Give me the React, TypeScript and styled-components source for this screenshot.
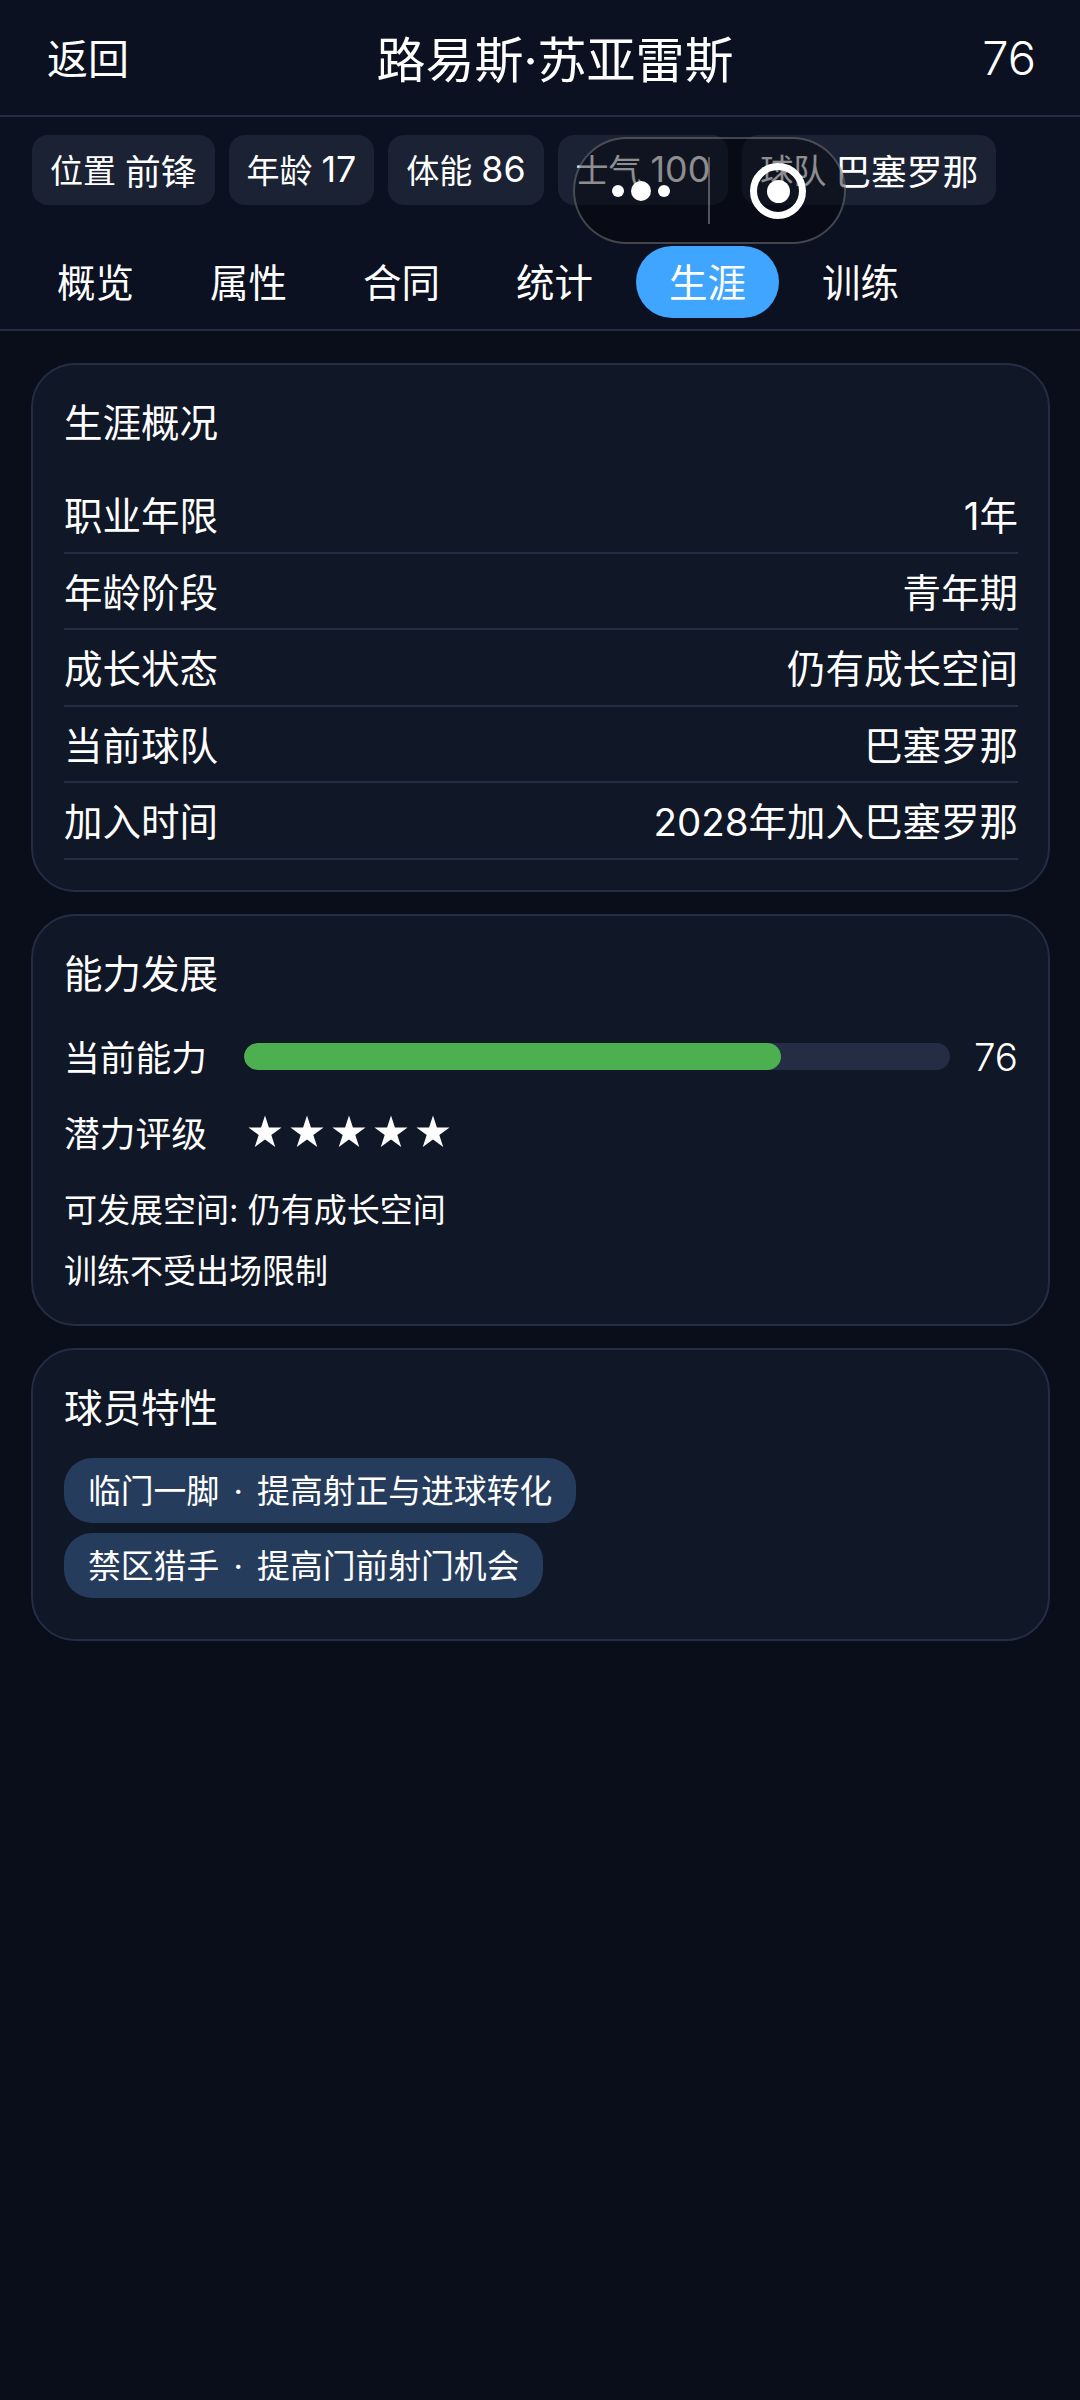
import React from 'react';
import styled, { createGlobalStyle } from 'styled-components';

const GlobalStyle = createGlobalStyle`
  html, body {
    margin: 0;
    padding: 0;
    background: #0a0e1a;
  }
  * {
    box-sizing: border-box;
  }
`;

const overview = [
  { label: '职业年限', value: '1年' },
  { label: '年龄阶段', value: '青年期' },
  { label: '成长状态', value: '仍有成长空间' },
  { label: '当前球队', value: '巴塞罗那' },
  { label: '加入时间', value: '2028年加入巴塞罗那' },
];

const quickStats = [
  { label: '位置', value: '前锋' },
  { label: '年龄', value: '17' },
  { label: '体能', value: '86' },
  { label: '士气', value: '100' },
  { label: '球队', value: '巴塞罗那' },
];

const tabs = ['概览', '属性', '合同', '统计', '生涯', '训练'];

const traits = ['临门一脚 · 提高射正与进球转化', '禁区猎手 · 提高门前射门机会'];

export default function App() {
  return (
    <>
      <GlobalStyle />
      <Page>
        <Header>
          <BackText>返回</BackText>
          <PlayerName>路易斯·苏亚雷斯</PlayerName>
          <Rating>76</Rating>
        </Header>

        <TopArea>
          <StatRow>
            {quickStats.map((s) => (
              <StatChip key={s.label}>
                <StatLabel>{s.label}</StatLabel>
                <StatValue>{s.value}</StatValue>
              </StatChip>
            ))}
          </StatRow>
          <TabRow>
            {tabs.map((t) => (
              <Tab key={t} $active={t === '生涯'}>
                {t}
              </Tab>
            ))}
          </TabRow>
        </TopArea>

        <Content>
          <Card>
            <CardTitle>生涯概况</CardTitle>
            {overview.map((row) => (
              <InfoRow key={row.label}>
                <span>{row.label}</span>
                <span>{row.value}</span>
              </InfoRow>
            ))}
          </Card>

          <Card>
            <CardTitle>能力发展</CardTitle>
            <AbilityRow>
              <AbilityLabel>当前能力</AbilityLabel>
              <BarTrack>
                <BarFill style={{ width: '76%' }} />
              </BarTrack>
              <AbilityValue>76</AbilityValue>
            </AbilityRow>
            <PotentialRow>
              <AbilityLabel>潜力评级</AbilityLabel>
              <Stars>
                {[0, 1, 2, 3, 4].map((i) => (
                  <StarIcon key={i} viewBox="0 0 24 24">
                    <path d="M12 1.6L14.47 9.2L22.46 9.2L15.99 13.9L18.47 21.5L12 16.8L5.53 21.5L8.01 13.9L1.54 9.2L9.53 9.2Z" />
                  </StarIcon>
                ))}
              </Stars>
            </PotentialRow>
            <NoteList>
              <Note>可发展空间: 仍有成长空间</Note>
              <Note>训练不受出场限制</Note>
            </NoteList>
          </Card>

          <Card>
            <CardTitle>球员特性</CardTitle>
            <TraitList>
              {traits.map((t) => (
                <TraitChip key={t}>{t}</TraitChip>
              ))}
            </TraitList>
          </Card>
        </Content>

        <CapsuleMenu>
          <Dots>
            <Dot $size={12} />
            <Dot $size={20} />
            <Dot $size={12} />
          </Dots>
          <CapsuleDivider />
          <CloseRing>
            <CloseCore />
          </CloseRing>
        </CapsuleMenu>
      </Page>
    </>
  );
}

const fontStack = `Inter, 'Noto Sans CJK SC', sans-serif`;

const Page = styled.div`
  position: relative;
  width: 1080px;
  height: 2400px;
  overflow: hidden;
  background: #0a0e1a;
  color: #fff;
  font-family: ${fontStack};
`;

const Header = styled.div`
  height: 117px;
  padding: 0 44px 0 47px;
  display: flex;
  align-items: center;
  justify-content: space-between;
  background: #0b1120;
  border-bottom: 2px solid #252d45;
`;

const BackText = styled.div`
  font-size: 41px;
  width: 120px;
  padding-bottom: 4px;
`;

const PlayerName = styled.div`
  font-size: 49px;
  margin-left: 27px;
  padding-bottom: 2px;
`;

const Rating = styled.div`
  font-size: 47px;
  font-weight: 300;
  width: 120px;
  text-align: right;
`;

const TopArea = styled.div`
  height: 214px;
  background: #0b1120;
  border-bottom: 2px solid #252d45;
`;

const StatRow = styled.div`
  display: flex;
  gap: 14px;
  padding: 18px 32px 0;
`;

const StatChip = styled.div`
  height: 70px;
  padding: 0 18px 2px;
  display: flex;
  align-items: center;
  gap: 9px;
  background: #1a2234;
  border-radius: 16px;
`;

const StatLabel = styled.span`
  font-size: 33px;
`;

const StatValue = styled.span`
  font-size: 35.75px;
`;

const TabRow = styled.div`
  display: flex;
  gap: 10px;
  padding: 41px 24px 0;
`;

const Tab = styled.div<{ $active?: boolean }>`
  height: 72px;
  padding: 0 33px 4px;
  display: flex;
  align-items: center;
  font-size: 38.5px;
  border-radius: 36px;
  background: ${(p) => (p.$active ? '#3fa5ff' : 'transparent')};
`;

const Content = styled.div`
  padding: 32px 30px 0 31px;
  display: flex;
  flex-direction: column;
  gap: 22px;
`;

const Card = styled.div`
  padding: 30px 30px 30px 31px;
  background: #101726;
  border: 2px solid #252d45;
  border-radius: 44px;
`;

const CardTitle = styled.div`
  font-size: 38.5px;
  line-height: 56px;
  margin-bottom: 26px;
`;

const InfoRow = styled.div`
  height: 76.5px;
  padding-bottom: 2px;
  display: flex;
  align-items: center;
  justify-content: space-between;
  font-size: 38.5px;
  border-bottom: 2px solid #252d45;
`;

const AbilityRow = styled.div`
  display: flex;
  align-items: center;
  height: 50px;
  margin-top: 30px;
`;

const PotentialRow = styled.div`
  display: flex;
  align-items: center;
  height: 50px;
  margin-top: 26px;
`;

const AbilityLabel = styled.div`
  width: 180px;
  font-size: 35.75px;
  white-space: nowrap;
  padding-bottom: 2px;
`;

const BarTrack = styled.div`
  flex: 1;
  height: 27px;
  border-radius: 14px;
  background: #252d45;
  overflow: hidden;
`;

const BarFill = styled.div`
  height: 100%;
  border-radius: 14px;
  background: #4caf50;
`;

const AbilityValue = styled.div`
  width: 68px;
  text-align: right;
  font-size: 38.5px;
  font-weight: 300;
`;

const Stars = styled.div`
  display: flex;
  gap: 4px;
  margin-left: 2px;
  transform: translateY(-1px);
`;

const StarIcon = styled.svg`
  width: 38px;
  height: 38px;
  fill: #fff;
`;

const NoteList = styled.div`
  display: flex;
  flex-direction: column;
  gap: 17px;
  margin: 30px 0 1px;
`;

const Note = styled.div`
  font-size: 33px;
  line-height: 44px;
`;

const TraitList = styled.div`
  display: flex;
  flex-direction: column;
  align-items: flex-start;
  gap: 10px;
  margin: -4px 0 11px;
`;

const TraitChip = styled.div`
  height: 65px;
  padding: 0 24px 3px;
  display: flex;
  align-items: center;
  font-size: 32.8px;
  word-spacing: 5px;
  background: #263c5c;
  border-radius: 28px;
  white-space: pre;
`;

const CapsuleMenu = styled.div`
  position: absolute;
  left: 573px;
  top: 137px;
  width: 273px;
  height: 107px;
  border-radius: 54px;
  border: 2px solid rgba(255, 255, 255, 0.24);
  background: rgba(4, 5, 8, 0.45);
`;

const Dots = styled.div`
  position: absolute;
  left: 37px;
  top: 42px;
  display: flex;
  align-items: center;
  gap: 7px;
`;

const Dot = styled.div<{ $size: number }>`
  width: ${(p) => p.$size}px;
  height: ${(p) => p.$size}px;
  border-radius: 50%;
  background: #fff;
`;

const CapsuleDivider = styled.div`
  position: absolute;
  left: 133px;
  top: 18px;
  width: 2px;
  height: 67px;
  background: rgba(255, 255, 255, 0.3);
`;

const CloseRing = styled.div`
  position: absolute;
  left: 175px;
  top: 24px;
  width: 56px;
  height: 56px;
  border-radius: 50%;
  border: 7px solid #fff;
  display: flex;
  align-items: center;
  justify-content: center;
`;

const CloseCore = styled.div`
  width: 23px;
  height: 23px;
  border-radius: 50%;
  background: #fff;
`;
